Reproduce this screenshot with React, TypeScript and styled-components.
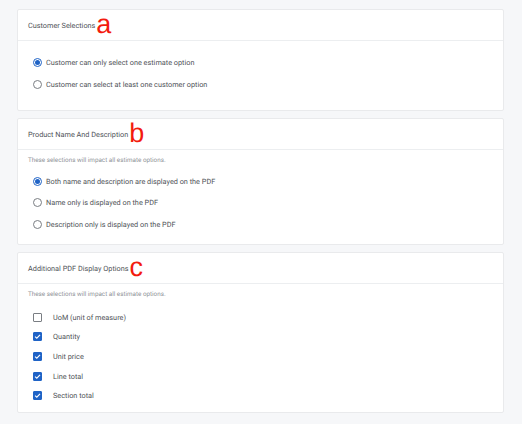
import React, { useState } from "react";
import styled, { createGlobalStyle } from "styled-components";

const GlobalStyle = createGlobalStyle`
  html, body {
    margin: 0;
    padding: 0;
    background: #f6f7f9;
    font-family: Roboto, "Liberation Sans", Arial, sans-serif;
    text-rendering: geometricPrecision;
  }
`;

const Page = styled.div`
  display: flex;
  flex-direction: column;
  gap: 7px;
  width: 487px;
  padding: 9px 0 12px 17px;
`;

const Card = styled.section`
  background: #ffffff;
  border: 1px solid #e9eaec;
  border-radius: 2px;
`;

const CardHeader = styled.div`
  display: flex;
  align-items: center;
  height: 30px;
  padding: 0 10px;
  border-bottom: 1px solid #eceef0;
`;

const Title = styled.h2`
  margin: 0;
  font-size: 7.3px;
  font-weight: 400;
  color: #4f5358;
`;

const Marker = styled.span`
  margin-left: 1px;
  font-family: "Liberation Sans", Arial, sans-serif;
  font-size: 27px;
  line-height: 1;
  color: #f31b0e;
  position: relative;
  top: -1px;
`;

const CardBody = styled.div<{ $top: number; $bottom: number }>`
  display: flex;
  flex-direction: column;
  padding: ${(p) => p.$top}px 10px ${(p) => p.$bottom}px;
`;

const Hint = styled.p<{ $after: number }>`
  margin: 0 0 ${(p) => p.$after}px;
  font-size: 6.3px;
  color: #8f9398;
`;

const OptionList = styled.div<{ $gap: number }>`
  display: flex;
  flex-direction: column;
  gap: ${(p) => p.$gap}px;
`;

const OptionRow = styled.label<{ $textGap: number }>`
  display: flex;
  align-items: center;
  gap: ${(p) => p.$textGap}px;
  height: 12px;
  padding-left: 5px;
  font-size: 7.3px;
  color: #4f5358;
  cursor: pointer;
`;

const RadioDot = styled.span<{ $on: boolean }>`
  box-sizing: border-box;
  width: 9px;
  height: 9px;
  border-radius: 50%;
  border: 1px solid ${(p) => (p.$on ? "#1f63c6" : "#7a7e83")};
  display: flex;
  align-items: center;
  justify-content: center;

  &::after {
    content: "";
    width: 5px;
    height: 5px;
    border-radius: 50%;
    background: ${(p) => (p.$on ? "#1f63c6" : "transparent")};
  }
`;

const CheckBox = styled.span<{ $on: boolean }>`
  box-sizing: border-box;
  width: 9px;
  height: 9px;
  border-radius: 1px;
  border: 1px solid ${(p) => (p.$on ? "#1f63c6" : "#7a7e83")};
  background: ${(p) => (p.$on ? "#1f63c6" : "#ffffff")};
  display: flex;
  align-items: center;
  justify-content: center;
`;

const Tick = () => (
  <svg width="7" height="7" viewBox="0 0 10 10">
    <path d="M1.5 5.2 L4 7.5 L8.6 2.6" fill="none" stroke="#fff" strokeWidth="1.6" />
  </svg>
);

const hint = "These selections will impact all estimate options.";

const App: React.FC = () => {
  const [customer, setCustomer] = useState(0);
  const [product, setProduct] = useState(0);
  const [extras, setExtras] = useState([false, true, true, true, true]);

  const customerOptions = [
    "Customer can only select one estimate option",
    "Customer can select at least one customer option",
  ];
  const productOptions = [
    "Both name and description are displayed on the PDF",
    "Name only is displayed on the PDF",
    "Description only is displayed on the PDF",
  ];
  const extraOptions = ["UoM (unit of measure)", "Quantity", "Unit price", "Line total", "Section total"];

  return (
    <>
      <GlobalStyle />
      <Page>
        <Card>
          <CardHeader>
            <Title>Customer Selections</Title>
            <Marker>a</Marker>
          </CardHeader>
          <CardBody $top={15} $bottom={20}>
            <OptionList $gap={10}>
              {customerOptions.map((o, i) => (
                <OptionRow key={o} $textGap={4} onClick={() => setCustomer(i)}>
                  <RadioDot $on={customer === i} />
                  {o}
                </OptionRow>
              ))}
            </OptionList>
          </CardBody>
        </Card>

        <Card>
          <CardHeader>
            <Title>Product Name And Description</Title>
            <Marker>b</Marker>
          </CardHeader>
          <CardBody $top={6} $bottom={14}>
            <Hint $after={11}>{hint}</Hint>
            <OptionList $gap={9.5}>
              {productOptions.map((o, i) => (
                <OptionRow key={o} $textGap={4} onClick={() => setProduct(i)}>
                  <RadioDot $on={product === i} />
                  {o}
                </OptionRow>
              ))}
            </OptionList>
          </CardBody>
        </Card>

        <Card>
          <CardHeader>
            <Title>Additional PDF Display Options</Title>
            <Marker>c</Marker>
          </CardHeader>
          <CardBody $top={6} $bottom={10}>
            <Hint $after={13}>{hint}</Hint>
            <OptionList $gap={7.7}>
              {extraOptions.map((o, i) => (
                <OptionRow
                  key={o}
                  $textGap={11}
                  onClick={() => setExtras(extras.map((v, j) => (j === i ? !v : v)))}
                >
                  <CheckBox $on={extras[i]}>{extras[i] && <Tick />}</CheckBox>
                  {o}
                </OptionRow>
              ))}
            </OptionList>
          </CardBody>
        </Card>
      </Page>
    </>
  );
};

export default App;
